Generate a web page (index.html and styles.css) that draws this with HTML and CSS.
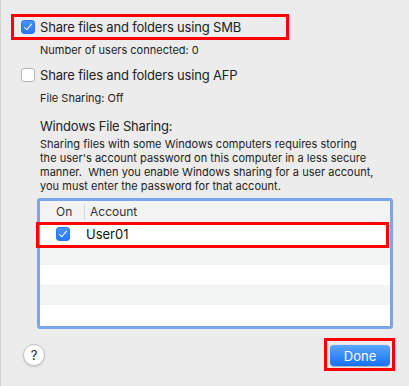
FILE: index.html
```html
<!DOCTYPE html>
<html>
<head>
    <meta charset="UTF-8">
    <title>Sharing Options</title>
    <link rel="stylesheet" href="styles.css">
</head>
<body>
    <div class="pane">
        <div class="option marked">
            <span class="check on"></span>
            <span class="option-label">Share files and folders using SMB</span>
        </div>
        <p class="note">Number of users connected: 0</p>

        <div class="option afp">
            <span class="check"></span>
            <span class="option-label">Share files and folders using AFP</span>
        </div>
        <p class="note">File Sharing: Off</p>

        <h2 class="section-title">Windows File Sharing:</h2>
        <p class="section-text">
            Sharing files with some Windows computers requires storing<br>
            the user's account password on this computer in a less secure<br>
            manner.&nbsp; When you enable Windows sharing for a user account,<br>
            you must enter the password for that account.
        </p>

        <div class="accounts">
            <div class="table-head">
                <div class="col-on">On</div>
                <div class="col-account">Account</div>
            </div>
            <div class="table-row selected">
                <div class="col-on"><span class="check on"></span></div>
                <div class="col-account">User01</div>
            </div>
            <div class="table-row stripe"></div>
            <div class="table-row"></div>
            <div class="table-row stripe"></div>
            <div class="table-row"></div>
        </div>

        <div class="footer">
            <button class="help">?</button>
            <div class="done-mark">
                <button class="done">Done</button>
            </div>
        </div>
    </div>
</body>
</html>
```

FILE: styles.css
```css
* {
    box-sizing: border-box;
}

html, body {
    margin: 0;
    padding: 0;
    width: 409px;
    height: 386px;
    overflow: hidden;
    background: #ececec;
    color: #222;
    font-family: Inter, "Noto Sans", sans-serif;
}

body {
    box-shadow: inset 1px 0 0 #d2d2d2;
}

.pane {
    padding: 14px 0 0 11px;
}

/* checkbox rows */
.option {
    display: flex;
    align-items: center;
    width: 278px;
    height: 26px;
    border: 3px solid transparent;
    padding-left: 7px;
    gap: 5px;
}

.option.marked {
    border-color: #ff0000;
}

.option.afp {
    margin-top: 5px;
}

.option-label {
    font-size: 13px;
    letter-spacing: -0.18px;
}

.check {
    display: inline-block;
    position: relative;
    width: 14px;
    height: 14px;
    border-radius: 3px;
    background: #fff;
    border: 1px solid #b5b5b5;
    flex: none;
}

.check.on {
    background: linear-gradient(180deg, #4693f8, #2a79f4);
    border-color: #2f76e6;
}

.check.on::after {
    content: "";
    position: absolute;
    left: 4px;
    top: 1px;
    width: 3px;
    height: 7px;
    border: solid #fff;
    border-width: 0 1.6px 1.6px 0;
    transform: rotate(40deg);
}

.note {
    margin: 3px 0 0 29px;
    font-size: 11px;
    line-height: 14px;
}

.section-title {
    margin: 13px 0 0 29px;
    font-size: 13px;
    font-weight: normal;
    line-height: 16px;
    letter-spacing: -0.2px;
}

.section-text {
    margin: 3px 0 0 29px;
    font-size: 11px;
    line-height: 14px;
    letter-spacing: 0.02px;
}

/* account table */
.accounts {
    margin: 5px 0 0 26px;
    width: 356px;
    height: 131px;
    border: 3px solid #78a7ea;
    border-radius: 3px;
    background: #fff;
}

.table-head {
    display: flex;
    height: 22px;
    align-items: center;
    background: #f3f3f3;
    font-size: 12px;
    color: #333;
    border-bottom: 1px solid #e4e4e4;
}

.table-head .col-account {
    border-left: 1px solid #d6d6d6;
    padding-left: 5px;
    height: 16px;
    line-height: 16px;
}

.col-on {
    width: 44px;
    padding-left: 16px;
    flex: none;
}

.table-row {
    display: flex;
    align-items: center;
    height: 20px;
}

.table-row.stripe {
    background: #f3f4f4;
}

.table-row.selected {
    position: relative;
    height: 22px;
    font-size: 13px;
    color: #111;
}

.table-row.selected .col-account {
    padding-left: 2px;
}

.table-row.selected .check {
    margin-top: 3px;
}

.table-row.selected::after {
    content: "";
    position: absolute;
    left: -4px;
    right: 1px;
    top: -1px;
    bottom: -3px;
    border: 3px solid #ff0000;
}

/* footer buttons */
.footer {
    display: flex;
    justify-content: space-between;
    align-items: center;
    margin-top: 9px;
    padding: 0 14px 0 12px;
}

.help {
    width: 22px;
    height: 22px;
    border-radius: 50%;
    border: 1px solid #c4c4c4;
    background: #fff;
    box-shadow: 0 1px 2px rgba(0, 0, 0, 0.15);
    font-family: Inter, sans-serif;
    font-size: 13px;
    color: #222;
    padding: 0;
    line-height: 20px;
}

.done-mark {
    border: 3px solid #ff0000;
    padding: 4px 2px 2px 3px;
}

.done {
    display: block;
    width: 60px;
    height: 21px;
    border: none;
    border-radius: 4px;
    background: linear-gradient(180deg, #5ba7fb, #1770f2);
    box-shadow: 0 0.5px 1px rgba(0, 0, 0, 0.25);
    color: #fff;
    font-family: Inter, sans-serif;
    font-size: 13px;
    padding: 0;
}
```
